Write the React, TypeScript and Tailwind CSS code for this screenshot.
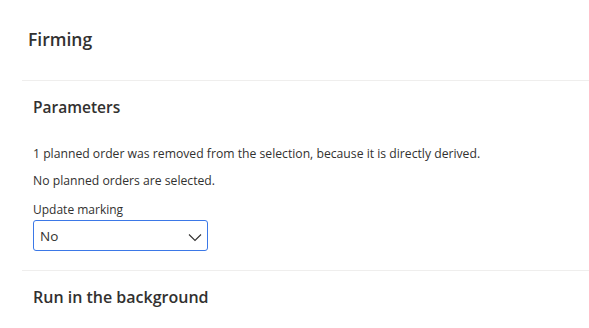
export default function App() {
  return (
    <div className="w-[589px] h-[328px] bg-white text-[#323130] overflow-hidden" style={{ fontFamily: '"Open Sans", "Noto Sans", sans-serif' }}>
      <div className="pl-[28px] pt-[27px] h-[80px]">
        <h1 className="text-[17.5px] font-semibold leading-[24px]">Firming</h1>
      </div>
      <div className="ml-[22px] border-t border-[#efeeed]">
        <section className="pl-[11px] pt-[15px] h-[189px]">
          <h2 className="text-[15.5px] font-semibold leading-[22px]">Parameters</h2>
          <p className="mt-[28px] text-[12.2px] leading-[16px]">
            1 planned order was removed from the selection, because it is directly derived.
          </p>
          <p className="mt-[11px] text-[12.2px] leading-[16px]">No planned orders are selected.</p>
          <label className="block mt-[13px] text-[12px] leading-[16px]">Update marking</label>
          <div className="mt-[2px] w-[175px] h-[31px] border-[1.5px] border-[#3b78e7] rounded-[3px] flex items-center justify-between pl-[6px] pr-[4px] pt-[2px]">
            <span className="text-[13.5px]">No</span>
            <svg width="16" height="16" viewBox="0 0 16 16" fill="none" stroke="#323130" strokeWidth="1.1">
              <path d="M2 5.5l6 6 6-6" />
            </svg>
          </div>
        </section>
        <section className="border-t border-[#efeeed] pl-[11px] pt-[15px]">
          <h2 className="text-[16px] font-semibold leading-[22px]">Run in the background</h2>
        </section>
      </div>
    </div>
  );
}
